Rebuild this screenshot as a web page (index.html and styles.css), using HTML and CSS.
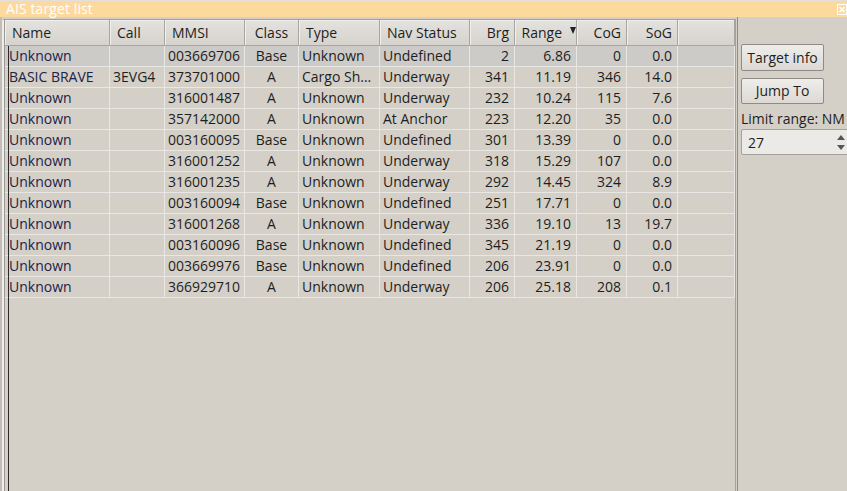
FILE: index.html
```html
<!DOCTYPE html>
<html lang="en">
<head>
  <meta charset="UTF-8" />
  <title>AIS target list</title>
  <link rel="stylesheet" href="styles.css">
</head>
<body>

  <div class="titlebar">
    <span class="title">AIS target list</span>
    <svg class="close" width="10" height="11" viewBox="0 0 10 11">
      <rect x="0.5" y="0.5" width="9" height="10" fill="none" stroke="#fff" stroke-width="1"/>
      <path d="M2.5 3 L7.5 8 M7.5 3 L2.5 8" stroke="#fff" stroke-width="1.6"/>
    </svg>
  </div>

  <div class="main">
    <div class="list">
      <div class="row head">
        <div class="hc">Name</div>
        <div class="hc">Call</div>
        <div class="hc">MMSI</div>
        <div class="hc c">Class</div>
        <div class="hc">Type</div>
        <div class="hc">Nav Status</div>
        <div class="hc r">Brg</div>
        <div class="hc r sorted">Range<span class="arrow"></span></div>
        <div class="hc r">CoG</div>
        <div class="hc r">SoG</div>
        <div class="hc"></div>
      </div>

      <div class="row sel">
        <div class="name">Unknown</div><div></div><div>003669706</div><div class="c">Base</div><div>Unknown</div><div>Undefined</div><div class="r">2</div><div class="r">6.86</div><div class="r">0</div><div class="r">0.0</div><div></div>
      </div>
      <div class="row">
        <div class="name">BASIC BRAVE</div><div>3EVG4</div><div>373701000</div><div class="c">A</div><div>Cargo Sh...</div><div>Underway</div><div class="r">341</div><div class="r">11.19</div><div class="r">346</div><div class="r">14.0</div><div></div>
      </div>
      <div class="row">
        <div class="name">Unknown</div><div></div><div>316001487</div><div class="c">A</div><div>Unknown</div><div>Underway</div><div class="r">232</div><div class="r">10.24</div><div class="r">115</div><div class="r">7.6</div><div></div>
      </div>
      <div class="row">
        <div class="name">Unknown</div><div></div><div>357142000</div><div class="c">A</div><div>Unknown</div><div>At Anchor</div><div class="r">223</div><div class="r">12.20</div><div class="r">35</div><div class="r">0.0</div><div></div>
      </div>
      <div class="row">
        <div class="name">Unknown</div><div></div><div>003160095</div><div class="c">Base</div><div>Unknown</div><div>Undefined</div><div class="r">301</div><div class="r">13.39</div><div class="r">0</div><div class="r">0.0</div><div></div>
      </div>
      <div class="row">
        <div class="name">Unknown</div><div></div><div>316001252</div><div class="c">A</div><div>Unknown</div><div>Underway</div><div class="r">318</div><div class="r">15.29</div><div class="r">107</div><div class="r">0.0</div><div></div>
      </div>
      <div class="row">
        <div class="name">Unknown</div><div></div><div>316001235</div><div class="c">A</div><div>Unknown</div><div>Underway</div><div class="r">292</div><div class="r">14.45</div><div class="r">324</div><div class="r">8.9</div><div></div>
      </div>
      <div class="row">
        <div class="name">Unknown</div><div></div><div>003160094</div><div class="c">Base</div><div>Unknown</div><div>Undefined</div><div class="r">251</div><div class="r">17.71</div><div class="r">0</div><div class="r">0.0</div><div></div>
      </div>
      <div class="row">
        <div class="name">Unknown</div><div></div><div>316001268</div><div class="c">A</div><div>Unknown</div><div>Underway</div><div class="r">336</div><div class="r">19.10</div><div class="r">13</div><div class="r">19.7</div><div></div>
      </div>
      <div class="row">
        <div class="name">Unknown</div><div></div><div>003160096</div><div class="c">Base</div><div>Unknown</div><div>Undefined</div><div class="r">345</div><div class="r">21.19</div><div class="r">0</div><div class="r">0.0</div><div></div>
      </div>
      <div class="row">
        <div class="name">Unknown</div><div></div><div>003669976</div><div class="c">Base</div><div>Unknown</div><div>Undefined</div><div class="r">206</div><div class="r">23.91</div><div class="r">0</div><div class="r">0.0</div><div></div>
      </div>
      <div class="row">
        <div class="name">Unknown</div><div></div><div>366929710</div><div class="c">A</div><div>Unknown</div><div>Underway</div><div class="r">206</div><div class="r">25.18</div><div class="r">208</div><div class="r">0.1</div><div></div>
      </div>

      <div class="caret"></div>
    </div>

    <div class="side">
      <button class="btn">Target info</button>
      <button class="btn">Jump To</button>
      <label class="limit">Limit range: NM</label>
      <div class="spin">
        <span class="value">27</span>
        <span class="spin-arrows">
          <span class="up"></span>
          <span class="down"></span>
        </span>
      </div>
    </div>
  </div>

</body>
</html>
```

FILE: styles.css
```css
body {
  margin: 0;
  width: 847px;
  height: 491px;
  overflow: hidden;
  background: #d4d0c8;
  font-family: "Open Sans", "DejaVu Sans", sans-serif;
  font-size: 14px;
  color: #1e1e1e;
}

.titlebar {
  display: flex;
  align-items: center;
  justify-content: space-between;
  height: 16px;
  border-top: 1px solid #e4e0d9;
  background: #fed99d;
  padding: 0 0 0 6px;
}

.title {
  color: #fff;
  line-height: 16px;
  letter-spacing: 0.1px;
}

.close {
  margin-top: 1px;
}

.main {
  display: flex;
  height: 474px;
  border-left: 2px solid #c2beb7;
}

.list {
  position: relative;
  width: 730px;
  margin-top: 2px;
  border-left: 2px solid #efede9;
  box-shadow: inset 1px 0 0 #9c9994;
  padding-left: 1px;
  border-top: 1px solid #a4a19c;
  border-right: 1px solid #a4a19c;
}

.row {
  display: grid;
  grid-template-columns: 105px 55px 80px 54px 81px 90px 45px 62px 50px 51px 57px;
  height: 21px;
}

.row > div {
  box-sizing: border-box;
  height: 21px;
  line-height: 19px;
  padding: 0 3px;
  border-right: 1px solid #e9e7e3;
  border-bottom: 1px solid #e9e7e3;
  white-space: nowrap;
  overflow: hidden;
}

.row .name {
  padding-left: 4px;
  color: #1b2248;
}

.row .c {
  text-align: center;
}

.row .r {
  text-align: right;
  padding-right: 5px;
}

.row.sel {
  background: #cdcbc8;
}

.row.head {
  height: 26px;
}

.row.head .hc {
  height: 26px;
  line-height: 26px;
  padding: 0 7px;
  background: linear-gradient(#e4e2de, #d6d3ce);
  border-right: 1px solid #a9a6a1;
  border-bottom: 1px solid #a9a6a1;
  box-shadow: inset 1px 1px 0 #f1efec;
}

.row.head .hc.r {
  padding-right: 5px;
}

.row.head .hc.c {
  text-align: center;
}

.row.head .hc.sorted {
  display: flex;
  justify-content: flex-end;
  padding-right: 0;
}

.arrow {
  width: 0;
  height: 0;
  margin: 7px 0 0 8px;
  border-left: 3px solid transparent;
  border-right: 3px solid transparent;
  border-top: 7px solid #222;
}

.caret {
  position: absolute;
  left: 4px;
  top: 26px;
  bottom: 0;
  width: 1px;
  background: #2a2a2a;
}

.side {
  display: flex;
  flex-direction: column;
  align-items: flex-start;
  margin-left: 1px;
  padding: 27px 0 0 3px;
  border-left: 1px solid #8f8c88;
  flex: 1;
}

.btn {
  width: 83px;
  height: 27px;
  margin-bottom: 7px;
  padding: 0 0 1px;
  font-family: inherit;
  font-size: 14px;
  color: #1e1e1e;
  background: linear-gradient(#efedea, #dcd9d5);
  border: 1px solid #8e8b87;
  border-radius: 2px;
}

.btn + .btn {
  height: 26px;
  margin-bottom: 5px;
}

.limit {
  line-height: 19px;
  white-space: nowrap;
  margin-bottom: 1px;
}

.spin {
  display: flex;
  align-items: center;
  justify-content: space-between;
  box-sizing: border-box;
  width: 110px;
  height: 26px;
  padding: 0 0 0 6px;
  background: #eceae6;
  border: 1px solid #a5a29d;
  border-radius: 2px;
}

.spin-arrows {
  display: flex;
  flex-direction: column;
  gap: 5px;
  margin-right: 5px;
}

.spin-arrows .up,
.spin-arrows .down {
  width: 0;
  height: 0;
  border-left: 4px solid transparent;
  border-right: 4px solid transparent;
}

.spin-arrows .up {
  border-bottom: 5px solid #555;
}

.spin-arrows .down {
  border-top: 5px solid #555;
}
```
